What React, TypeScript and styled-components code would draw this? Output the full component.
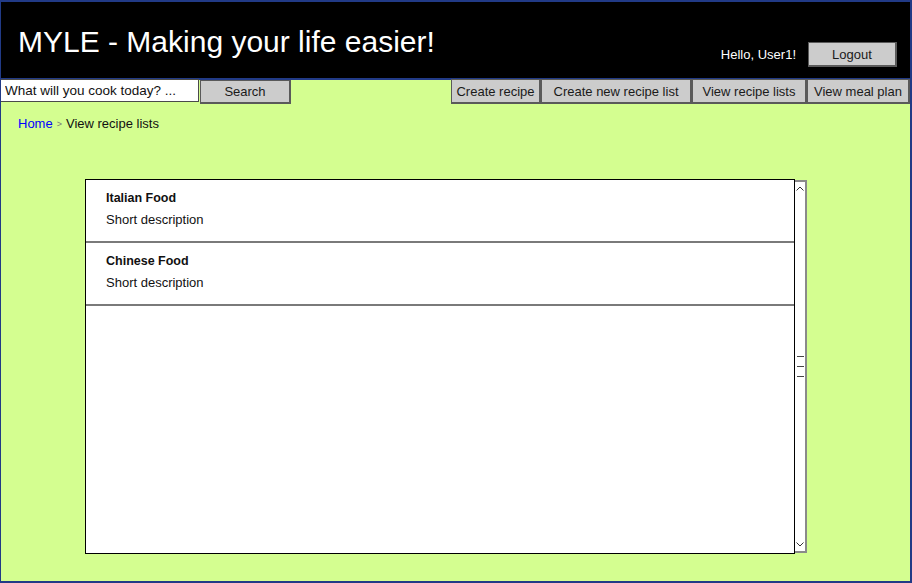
import { FC } from "react";
import styled, { createGlobalStyle } from "styled-components";

const GlobalStyle = createGlobalStyle`
  html, body {
    margin: 0;
    padding: 0;
    background: #ffffff;
  }
  body {
    font-family: "Liberation Sans", Arial, sans-serif;
  }
`;

interface IRecipeList {
  id: number;
  title: string;
  description: string;
}

const lists: IRecipeList[] = [
  { id: 1, title: "Italian Food", description: "Short description" },
  { id: 2, title: "Chinese Food", description: "Short description" },
];

const navItems = [
  { label: "Create recipe", width: 90 },
  { label: "Create new recipe list", width: 151 },
  { label: "View recipe lists", width: 115 },
  { label: "View meal plan", width: 103 },
];

const Chevron: FC<{ down?: boolean }> = ({ down }) => (
  <svg width="8" height="5" viewBox="0 0 8 5">
    <path
      d={down ? "M0.5 0.5 L4 4 L7.5 0.5" : "M0.5 4.5 L4 1 L7.5 4.5"}
      fill="none"
      stroke="#333"
      strokeWidth="1"
    />
  </svg>
);

const App: FC = () => {
  return (
    <>
      <GlobalStyle />
      <Frame>
        <Header>
          <Title>MYLE - Making your life easier!</Title>
          <UserArea>
            <Greeting>Hello, User1!</Greeting>
            <Button $width={89}>Logout</Button>
          </UserArea>
        </Header>

        <Toolbar>
          <SearchInput placeholder="What will you cook today? ..." />
          <SearchButton $width={91}>Search</SearchButton>
          <Spacer />
          {navItems.map((item) => (
            <Button key={item.label} $width={item.width}>
              {item.label}
            </Button>
          ))}
        </Toolbar>

        <Breadcrumbs>
          <a href="#">Home</a>
          <span className="separator">&gt;</span>
          <span>View recipe lists</span>
        </Breadcrumbs>

        <Panel>
          <ListBox>
            {lists.map((list) => (
              <ListItem key={list.id}>
                <div className="list__title">{list.title}</div>
                <div className="list__description">{list.description}</div>
              </ListItem>
            ))}
          </ListBox>
          <Scrollbar>
            <Chevron />
            <Grip>
              <span />
              <span />
              <span />
            </Grip>
            <Chevron down />
          </Scrollbar>
        </Panel>
      </Frame>
    </>
  );
};

export default App;

const Frame = styled.div`
  width: 912px;
  height: 583px;
  box-sizing: border-box;
  border: 2px solid #213a86;
  border-left-width: 1px;
  background-color: #d4fe90;
  display: flex;
  flex-direction: column;
  overflow: hidden;
`;

const Header = styled.header`
  height: 76px;
  background-color: #000000;
  border-bottom: 2px solid #213a86;
  display: flex;
  justify-content: space-between;
  padding: 0 13px 0 17px;
`;

const Title = styled.h1`
  margin: 0;
  padding-top: 25px;
  font-family: "Liberation Sans", Arial, sans-serif;
  font-size: 30px;
  line-height: 30px;
  font-weight: normal;
  color: #ffffff;
`;

const UserArea = styled.div`
  align-self: flex-end;
  margin-bottom: 11px;
  display: flex;
  align-items: center;
  column-gap: 12px;
`;

const Greeting = styled.span`
  font-size: 13px;
  color: #ffffff;
`;

const Button = styled.button<{ $width: number }>`
  width: ${({ $width }) => $width}px;
  height: 25px;
  box-sizing: border-box;
  padding: 0;
  background-color: #cccccc;
  border: 1px solid #5a5a5a;
  border-right-width: 2px;
  border-bottom-width: 2px;
  border-radius: 0;
  font-family: "Liberation Sans", Arial, sans-serif;
  font-size: 13px;
  color: #1a1a1a;
  cursor: pointer;
  flex-shrink: 0;
`;

const Toolbar = styled.nav`
  display: flex;
  align-items: flex-start;
  height: 25px;
  margin: -1px 0 0 -1px;
`;

const SearchInput = styled.input`
  width: 199px;
  height: 23px;
  box-sizing: border-box;
  margin: 0;
  padding: 0 4px;
  border: 1px solid #4a4a4a;
  background-color: #ffffff;
  font-family: "Liberation Sans", Arial, sans-serif;
  font-size: 13.5px;
  outline: none;

  &::placeholder {
    color: #111111;
    opacity: 1;
  }
`;

const SearchButton = styled(Button)`
  margin: 1px 0 0 1px;
  height: 24px;
`;

const Spacer = styled.div`
  flex: 1;
`;

const Breadcrumbs = styled.div`
  margin-top: 12px;
  padding-left: 17px;
  font-size: 13px;
  line-height: 16px;
  color: #111111;
  display: flex;
  align-items: center;

  a {
    color: #0000ff;
    text-decoration: none;
  }

  .separator {
    margin: 0 4px;
    font-size: 9px;
    color: #777777;
  }
`;

const Panel = styled.section`
  margin: 47px 0 0 84px;
  width: 722px;
  height: 375px;
  display: flex;
`;

const ListBox = styled.div`
  flex: 1;
  background-color: #ffffff;
  border: 1px solid #000000;
  display: flex;
  flex-direction: column;
`;

const ListItem = styled.div`
  height: 63px;
  flex-shrink: 0;
  box-sizing: border-box;
  padding: 10px 0 0 20px;
  border-bottom: 2px solid #7a7a7a;

  .list__title {
    font-size: 12.5px;
    font-weight: bold;
    line-height: 16px;
    color: #111111;
  }

  .list__description {
    margin-top: 6px;
    font-size: 13px;
    line-height: 16px;
    color: #111111;
  }
`;

const Scrollbar = styled.div`
  width: 12px;
  margin-top: 1px;
  height: 373px;
  box-sizing: border-box;
  background-color: #ffffff;
  border: 2px solid #8a8a8a;
  border-left: none;
  display: flex;
  flex-direction: column;
  align-items: center;
  justify-content: space-between;
  padding: 4px 0 4px;
`;

const Grip = styled.div`
  display: flex;
  flex-direction: column;
  row-gap: 9px;

  span {
    display: block;
    width: 7px;
    height: 1px;
    background-color: #444444;
  }
`;
